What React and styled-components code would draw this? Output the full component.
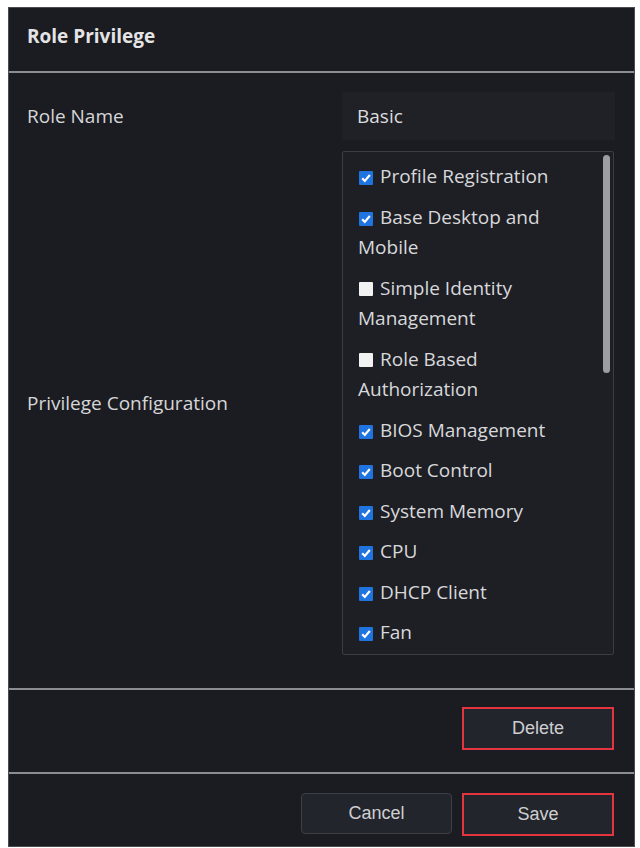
import styled, { createGlobalStyle } from "styled-components";

const GlobalStyle = createGlobalStyle`
  body {
    margin: 0;
    background: #ffffff;
    font-family: "Open Sans", "Noto Sans", sans-serif;
  }
`;

const Page = styled.div`
  padding: 7px 5px 1px 8px;
`;

const Panel = styled.div`
  height: 840px;
  box-sizing: border-box;
  background: #1b1c21;
  border: 1px solid #4a4c52;
  display: flex;
  flex-direction: column;
  color: #d6d6d8;
`;

const Header = styled.div`
  height: 65px;
  flex-shrink: 0;
  box-sizing: border-box;
  display: flex;
  align-items: center;
  padding: 0 18px 8px;
  font-size: 19px;
  font-weight: 700;
  color: #e4e4e6;
  border-bottom: 2px solid #8c8d90;
`;

const Body = styled.div`
  display: flex;
  flex-direction: column;
  gap: 11px;
  padding: 19px 19px 33px 18px;
  border-bottom: 2px solid #8c8d90;
`;

const Row = styled.div`
  display: grid;
  grid-template-columns: 315px 1fr;
  align-items: center;
`;

const Label = styled.div`
  font-size: 19px;
`;

const Input = styled.div`
  height: 48px;
  display: flex;
  align-items: center;
  padding: 0 15px;
  background: #1f2127;
  font-size: 19px;
  color: #dcdcde;
`;

const ListBox = styled.div`
  position: relative;
  height: 504px;
  box-sizing: border-box;
  margin-right: 1px;
  border: 1px solid #3b3d44;
  border-radius: 2px;
  background: #1d1f25;
  padding: 9px 16px 0 15px;
  overflow: hidden;
`;

const Thumb = styled.div`
  position: absolute;
  top: 3px;
  right: 3px;
  width: 7px;
  height: 218px;
  border-radius: 4px;
  background: #9c9da1;
`;

const Item = styled.div`
  font-size: 19px;
  line-height: 30.5px;
  margin-bottom: 10px;
  color: #d8d8da;
`;

const Box = styled.span`
  display: inline-flex;
  align-items: center;
  justify-content: center;
  width: 14px;
  height: 14px;
  margin: 0 7px 0 1px;
  vertical-align: -1px;
  border-radius: 1px;
  background: ${(p) => (p.checked ? "#1f74e0" : "#f2f2f2")};
`;

const Actions = styled.div`
  display: flex;
  justify-content: flex-end;
  align-items: flex-start;
  gap: 10px;
  flex-shrink: 0;
  box-sizing: border-box;
  padding: ${(p) => p.top}px 20px 0 0;
  height: ${(p) => p.h}px;
  border-bottom: ${(p) => (p.line ? "2px solid #8c8d90" : "none")};
`;

const Button = styled.button`
  width: ${(p) => (p.danger ? 152 : 151)}px;
  height: ${(p) => (p.danger ? 43 : 41)}px;
  box-sizing: border-box;
  background: #22252b;
  border: ${(p) => (p.danger ? "2px solid #e3343f" : "1px solid #3c3f46")};
  border-radius: ${(p) => (p.danger ? 0 : 4)}px;
  color: #cfcfd2;
  font-family: "Liberation Sans", Arial, sans-serif;
  font-size: 18px;
  cursor: pointer;
`;

const privileges = [
  ["Profile Registration", true],
  ["Base Desktop and Mobile", true],
  ["Simple Identity Management", false],
  ["Role Based Authorization", false],
  ["BIOS Management", true],
  ["Boot Control", true],
  ["System Memory", true],
  ["CPU", true],
  ["DHCP Client", true],
  ["Fan", true],
];

const Check = ({ checked }) => (
  <Box checked={checked}>
    {checked && (
      <svg width="12" height="12" viewBox="0 0 11 11">
        <path d="M2 5.8 L4.4 8.2 L9 2.8" fill="none" stroke="#fff" strokeWidth="2" />
      </svg>
    )}
  </Box>
);

export default function App() {
  return (
    <Page>
      <GlobalStyle />
      <Panel>
        <Header>Role Privilege</Header>
        <Body>
          <Row>
            <Label>Role Name</Label>
            <Input>Basic</Input>
          </Row>
          <Row>
            <Label>Privilege Configuration</Label>
            <ListBox>
              {privileges.map(([name, on]) => (
                <Item key={name}>
                  <Check checked={on} />
                  {name}
                </Item>
              ))}
              <Thumb />
            </ListBox>
          </Row>
        </Body>
        <Actions h={84} top={17} line>
          <Button danger>Delete</Button>
        </Actions>
        <Actions h={72} top={19}>
          <Button>Cancel</Button>
          <Button danger>Save</Button>
        </Actions>
      </Panel>
    </Page>
  );
}
